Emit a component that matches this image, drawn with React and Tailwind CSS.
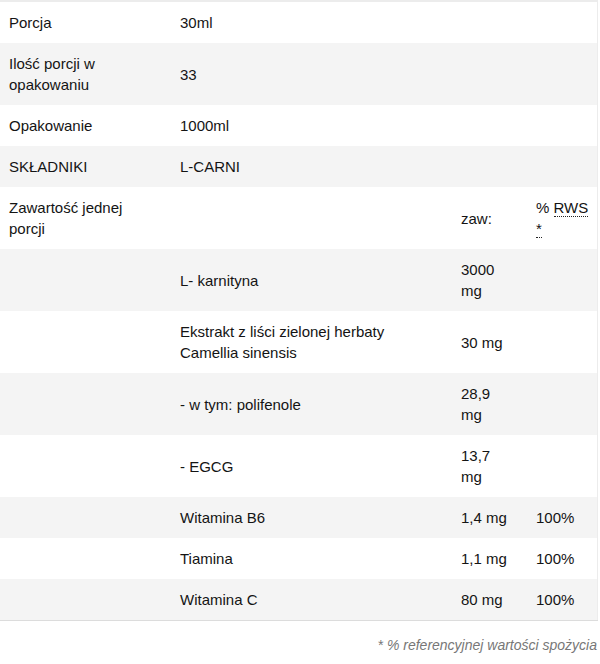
const rows = [
  { a: 'Porcja', b: '30ml' },
  { a: <>Ilość porcji w<br />opakowaniu</>, b: '33' },
  { a: 'Opakowanie', b: '1000ml' },
  { a: 'SKŁADNIKI', b: 'L-CARNI' },
  {
    a: <>Zawartość jednej<br />porcji</>,
    b: '',
    c: 'zaw:',
    d: (
      <>
        %{' '}
        <abbr className="no-underline border-b border-dotted border-[#222]">RWS</abbr>
        <br />
        <abbr className="no-underline border-b border-dotted border-[#222]">*</abbr>
      </>
    ),
  },
  { a: '', b: 'L- karnityna', c: <>3000<br />mg</> },
  { a: '', b: <>Ekstrakt z liści zielonej herbaty<br />Camellia sinensis</>, c: '30 mg' },
  { a: '', b: '- w tym: polifenole', c: <>28,9<br />mg</> },
  { a: '', b: '- EGCG', c: <>13,7<br />mg</> },
  { a: '', b: 'Witamina B6', c: '1,4 mg', d: '100%' },
  { a: '', b: 'Tiamina', c: '1,1 mg', d: '100%' },
  { a: '', b: 'Witamina C', c: '80 mg', d: '100%' },
];

export default function App() {
  return (
    <div className="w-[600px] min-h-[664px] bg-white text-[#141414] font-['Liberation_Sans','Arial',sans-serif] text-[15px] leading-[21px]">
      <table className="w-[598px] table-fixed border-collapse border-t-2 border-t-[#ececec] border-r border-r-[#ececec] border-b border-b-[#dcdcdc]">
        <colgroup>
          <col className="w-[172px]" />
          <col className="w-[281px]" />
          <col className="w-[75px]" />
          <col />
        </colgroup>
        <tbody>
          {rows.map((r, i) => (
            <tr key={i} className={i % 2 === 1 ? 'bg-[#f4f4f4]' : 'bg-white'}>
              <td className="py-[10px] pl-[9px] pr-2 align-middle">{r.a}</td>
              <td className="py-[10px] px-2 align-middle">{r.b}</td>
              <td className="py-[10px] px-2 align-middle">{r.c}</td>
              <td className="py-[10px] px-2 align-middle">{r.d}</td>
            </tr>
          ))}
        </tbody>
      </table>
      <p className="mt-[14px] pr-[3px] text-right italic text-[14px] text-[#777777]">
        * % referencyjnej wartości spożycia
      </p>
    </div>
  );
}
